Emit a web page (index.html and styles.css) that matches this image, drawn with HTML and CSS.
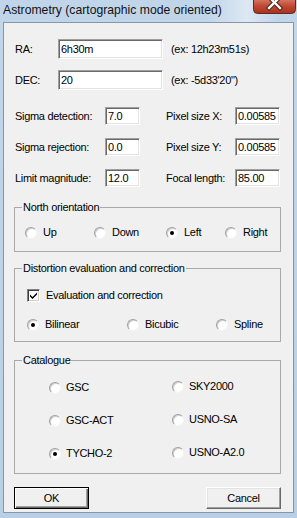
FILE: index.html
```html
<!DOCTYPE html>
<html lang="en">
<head>
    <meta charset="UTF-8">
    <meta name="viewport" content="width=device-width, initial-scale=1.0">
    <title>Astrometry</title>
    <link rel="stylesheet" href="styles.css">
</head>
<body>

    <div class="window">

        <div class="titlebar">
            <span class="title">Astrometry (cartographic mode oriented)</span>
            <span class="close">
                <svg width="43" height="14" viewBox="0 0 43 14">
                    <defs>
                        <linearGradient id="red" x1="0" y1="0" x2="0" y2="1">
                            <stop offset="0" stop-color="#d9826f"/>
                            <stop offset="0.5" stop-color="#c24a35"/>
                            <stop offset="1" stop-color="#a8301c"/>
                        </linearGradient>
                    </defs>
                    <path d="M0.5 -2 V9.5 Q0.5 13.5 4.5 13.5 H38.5 Q42.5 13.5 42.5 9.5 V-2" fill="url(#red)" stroke="#5c2a22"/>
                    <path d="M16 -3 L27 8 M27 -3 L16 8" stroke="#4a2018" stroke-width="4.4" stroke-linecap="square"/>
                    <path d="M16 -3 L27 8 M27 -3 L16 8" stroke="#ffffff" stroke-width="2.4" stroke-linecap="square"/>
                </svg>
            </span>
        </div>

        <div class="client">

            <div class="coord-row">
                <label>RA:</label>
                <input class="field" type="text" value="6h30m">
                <span>(ex: 12h23m51s)</span>
            </div>
            <div class="coord-row">
                <label>DEC:</label>
                <input class="field" type="text" value="20">
                <span>(ex: -5d33'20")</span>
            </div>

            <div class="params">
                <div class="param-row">
                    <label>Sigma detection:</label>
                    <input class="field" type="text" value="7.0">
                    <label>Pixel size X:</label>
                    <input class="field" type="text" value="0.00585">
                </div>
                <div class="param-row">
                    <label>Sigma rejection:</label>
                    <input class="field" type="text" value="0.0">
                    <label>Pixel size Y:</label>
                    <input class="field" type="text" value="0.00585">
                </div>
                <div class="param-row">
                    <label>Limit magnitude:</label>
                    <input class="field" type="text" value="12.0">
                    <label>Focal length:</label>
                    <input class="field" type="text" value="85.00">
                </div>
            </div>

            <fieldset class="group group-north">
                <legend>North orientation</legend>
                <div class="north-row">
                    <span class="opt"><span class="radio"></span>Up</span>
                    <span class="opt"><span class="radio"></span>Down</span>
                    <span class="opt"><span class="radio checked"></span>Left</span>
                    <span class="opt"><span class="radio"></span>Right</span>
                </div>
            </fieldset>

            <fieldset class="group group-dist">
                <legend>Distortion evaluation and correction</legend>
                <div class="opt check-opt">
                    <span class="checkbox">
                        <svg width="9" height="9" viewBox="0 0 9 9">
                            <path d="M1 3.5 L3.5 6 L8 1.5 V3.5 L3.5 8 L1 5.5 Z" fill="#000"/>
                        </svg>
                    </span>
                    Evaluation and correction
                </div>
                <div class="dist-row">
                    <span class="opt"><span class="radio checked"></span>Bilinear</span>
                    <span class="opt"><span class="radio"></span>Bicubic</span>
                    <span class="opt"><span class="radio"></span>Spline</span>
                </div>
            </fieldset>

            <fieldset class="group group-cat">
                <legend>Catalogue</legend>
                <div class="cat-grid">
                    <span class="opt"><span class="radio"></span>GSC</span>
                    <span class="opt right"><span class="radio"></span>SKY2000</span>
                    <span class="opt"><span class="radio"></span>GSC-ACT</span>
                    <span class="opt right"><span class="radio"></span>USNO-SA</span>
                    <span class="opt"><span class="radio checked"></span>TYCHO-2</span>
                    <span class="opt right"><span class="radio"></span>USNO-A2.0</span>
                </div>
            </fieldset>

            <div class="buttons">
                <button class="btn btn-default">OK</button>
                <button class="btn">Cancel</button>
            </div>

        </div>
    </div>

</body>
</html>
```

FILE: styles.css
```css
body {
    margin: 0;
    font-family: "Liberation Sans", Arial, sans-serif;
}

.window {
    width: 297px;
    height: 518px;
    background: linear-gradient(#c3d6ea, #b8cfe6);
    overflow: hidden;
}

.titlebar {
    height: 22px;
    display: flex;
    justify-content: space-between;
    align-items: flex-start;
    background: linear-gradient(90deg, #c1d5ea 70%, #dde8f3 83%, #c1d5ea 94%);
}

.title {
    padding: 3px 0 0 3px;
    font-family: "Liberation Sans", sans-serif;
    font-size: 12.2px;
    line-height: 14px;
    color: #111;
}

.close {
    margin-right: 1px;
    height: 14px;
}

.close svg {
    display: block;
}

.client {
    margin: 0 3px;
    height: 491px;
    background: #f0f0f0;
    border: 1px solid #8496aa;
    box-sizing: border-box;
    padding: 16px 13px 0 10px;
    font-size: 11px;
    letter-spacing: -0.3px;
    line-height: 13px;
    color: #000;
}

.field {
    box-sizing: border-box;
    margin: 0;
    padding: 0 2px;
    background: #fff;
    border: 1px solid;
    border-color: #a0a0a0 #ffffff #ffffff #a0a0a0;
    box-shadow: inset 1px 1px 0 #696969, inset -1px -1px 0 #e3e3e3;
    font-family: "Liberation Sans", Arial, sans-serif;
    font-size: 11px;
    letter-spacing: -0.3px;
    color: #000;
    outline: none;
}

.coord-row {
    display: grid;
    grid-template-columns: 36px 105px auto;
    column-gap: 8px;
    align-items: center;
    height: 20px;
}

.coord-row + .coord-row {
    margin-top: 11px;
}

.coord-row label, .param-row label {
    padding-left: 1px;
}

.coord-row .field {
    height: 20px;
}

.params {
    margin-top: 17px;
    display: flex;
    flex-direction: column;
    gap: 13px;
}

.param-row {
    display: grid;
    grid-template-columns: 91px 35px 69px 45px;
    column-gap: 0;
    align-items: center;
    height: 18px;
}

.param-row label:nth-of-type(2) {
    margin-left: 26px;
    padding-left: 0;
}

.param-row {
    grid-template-columns: 91px 35px 95px 45px;
}

.param-row .field {
    height: 18px;
}

.group {
    margin: 0;
    padding: 0;
    width: 267px;
    box-sizing: border-box;
    border: 1px solid #d5dfe5;
    box-shadow: inset 0 0 0 0 #fff;
    border-color: #a9a9a9;
}

.group legend {
    margin-left: 7px;
    padding: 0 1px;
    line-height: 13px;
}

.group-north {
    margin-top: 14px;
    height: 51px;
}

.group-dist {
    margin-top: 10px;
    height: 80px;
}

.group-cat {
    margin-top: 12px;
    height: 120px;
}

.opt {
    display: flex;
    align-items: center;
    gap: 6px;
    height: 13px;
}

.radio {
    flex: none;
    width: 12px;
    height: 12px;
    box-sizing: border-box;
    border-radius: 50%;
    background: #fff;
    border: 1px solid;
    border-color: #a0a0a0 #f4f4f4 #f4f4f4 #a0a0a0;
    box-shadow: inset 1px 1px 0 #cfcfcf;
    display: flex;
    align-items: center;
    justify-content: center;
}

.radio.checked::after {
    content: "";
    width: 4px;
    height: 4px;
    border-radius: 50%;
    background: #000;
}

.north-row {
    display: grid;
    grid-template-columns: 69px 72px 59px auto;
    padding: 12px 0 0 10px;
}

.check-opt {
    margin: 14px 0 0 12px;
    gap: 5px;
}

.checkbox {
    flex: none;
    width: 13px;
    height: 13px;
    box-sizing: border-box;
    background: #fff;
    border: 1px solid;
    border-color: #808080 #ffffff #ffffff #808080;
    box-shadow: inset 1px 1px 0 #404040, inset -1px -1px 0 #d4d0c8;
    display: flex;
    align-items: center;
    justify-content: center;
}

.checkbox svg {
    display: block;
}

.dist-row {
    display: grid;
    grid-template-columns: 100px 89px auto;
    padding: 16px 0 0 12px;
}

.dist-row .opt, .check-opt {
    gap: 6px;
}

.cat-grid {
    display: grid;
    grid-template-columns: 123px auto;
    row-gap: 20px;
    padding: 14px 0 0 34px;
}

.cat-grid .opt {
    gap: 5px;
}

.cat-grid .right {
    margin-top: -1px;
    margin-bottom: 1px;
}

.buttons {
    margin-top: 13px;
    width: 267px;
    display: flex;
    justify-content: space-between;
}

.btn {
    width: 75px;
    height: 22px;
    margin: 0;
    padding: 0;
    box-sizing: border-box;
    background: #f0f0f0;
    border: 1px solid;
    border-color: #ffffff #696969 #696969 #ffffff;
    box-shadow: inset -1px -1px 0 #a0a0a0, inset 1px 1px 0 #e3e3e3;
    font-family: "Liberation Sans", Arial, sans-serif;
    font-size: 11px;
    letter-spacing: -0.3px;
    color: #000;
}

.btn-default {
    border-color: #000;
    box-shadow: inset 1px 1px 0 #fff, inset -1px -1px 0 #696969, inset -2px -2px 0 #a0a0a0;
}
```
